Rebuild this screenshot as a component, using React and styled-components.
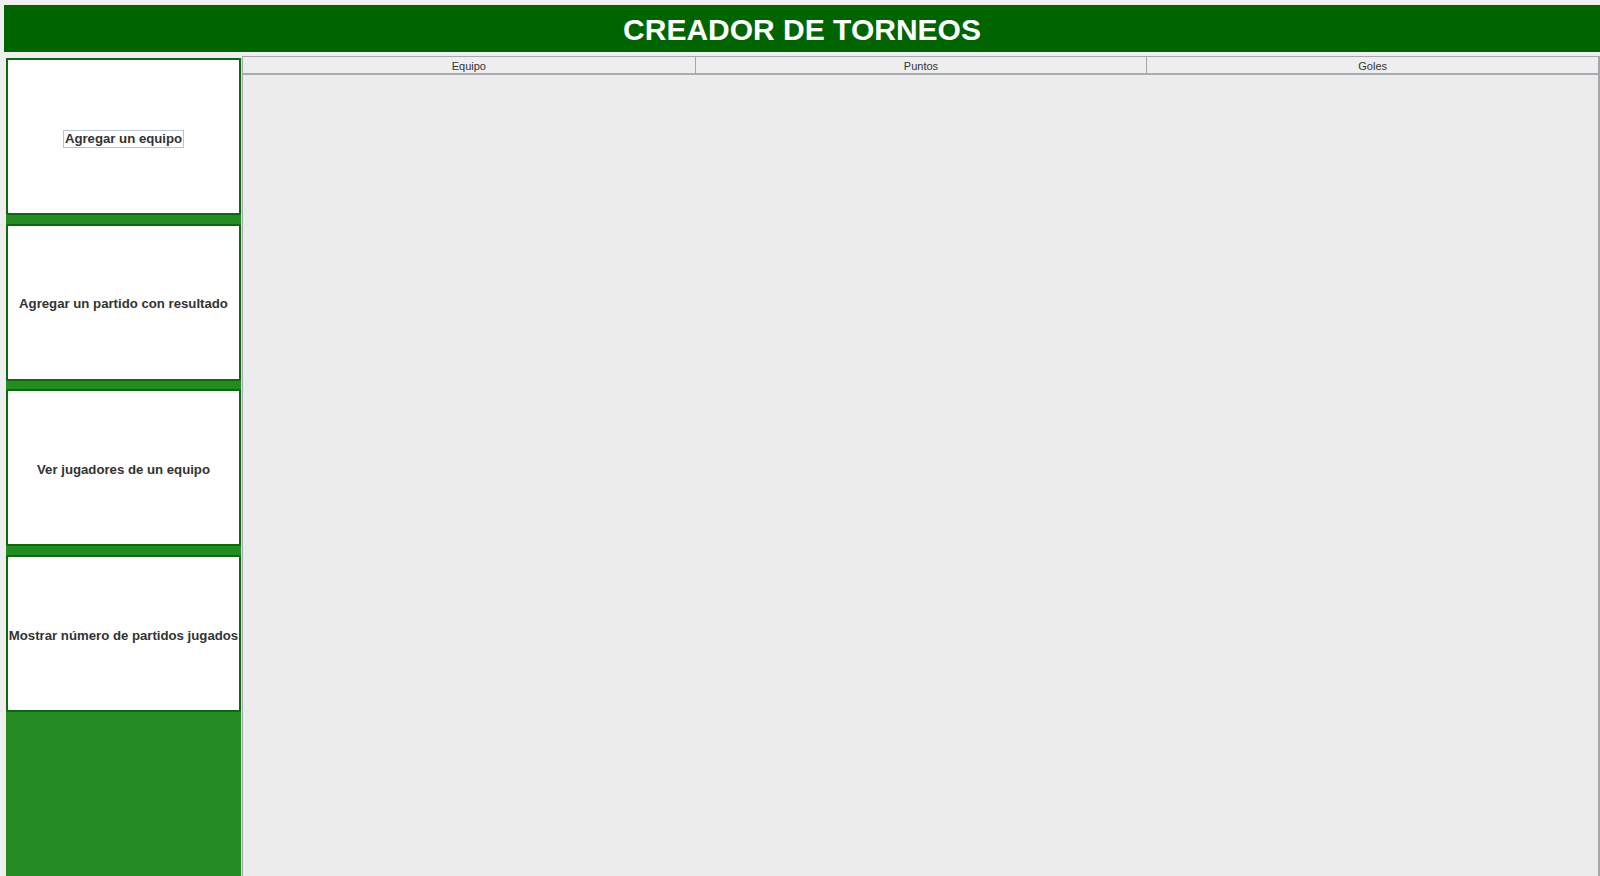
import React from "react";
import styled, { createGlobalStyle } from "styled-components";

const GlobalStyle = createGlobalStyle`
  html, body {
    margin: 0;
    padding: 0;
    background: #eeeeee;
    overflow: hidden;
  }
  body {
    font-family: "Liberation Sans", Arial, sans-serif;
  }
`;

const Frame = styled.div`
  height: 876px;
  padding: 5px 0 0 4px;
  box-sizing: border-box;
  display: flex;
  flex-direction: column;
`;

const TitleBar = styled.header`
  height: 47px;
  background-color: #006400;
  color: #fff;
  display: flex;
  align-items: center;
  justify-content: center;
  padding-top: 2px;
  box-sizing: border-box;
  font-size: 30px;
  font-weight: bold;
`;

const Body = styled.div`
  flex: 1;
  display: flex;
  flex-direction: row;
  margin-top: 4px;
  padding-left: 2px;
  min-height: 0;
`;

const Menu = styled.nav`
  width: 236px;
  flex: 0 0 236px;
  box-sizing: border-box;
  margin-top: 2px;
  background-color: #228b22;
  display: grid;
  grid-template-columns: minmax(0, 1fr);
  grid-auto-rows: 157px;
  row-gap: 8.7px;
  align-content: start;
  border-right: 1px solid #d6dcd6;
`;

const MenuButton = styled.button`
  width: 100%;
  min-width: 0;
  box-sizing: border-box;
  background: #fff;
  border: 2px solid #0c6a0c;
  border-radius: 2px;
  margin: 0;
  padding: 4px 0 0;
  font-family: "Liberation Sans", Arial, sans-serif;
  font-size: 13.2px;
  font-weight: bold;
  color: #333333;
  cursor: pointer;
  display: flex;
  align-items: center;
  justify-content: center;
  white-space: nowrap;
  overflow: hidden;
`;

const Label = styled.span`
  padding: 0 1px;
  line-height: 16px;
  border: 1px solid ${(p) => (p.$focused ? "#b8c4d4" : "transparent")};
`;

const Table = styled.section`
  flex: 1;
  background: #ececec;
  border-left: 1px solid #a4a8ae;
  border-right: 2px solid #a4a8ae;
  display: flex;
  flex-direction: column;
`;

const HeaderRow = styled.div`
  display: grid;
  grid-template-columns: 1fr 1fr 1fr;
  height: 16px;
  border-top: 1px solid #a4a8ae;
  border-bottom: 2px solid #a8abb0;
  background: #eeeeee;
`;

const HeaderCell = styled.div`
  font-family: "Liberation Sans", Arial, sans-serif;
  font-size: 11px;
  color: #333;
  display: flex;
  align-items: center;
  justify-content: center;
  padding-top: 1px;
  border-left: ${(p) => (p.$first ? "none" : "1px solid #a4a8ae")};
`;

const actions = [
  "Agregar un equipo",
  "Agregar un partido con resultado",
  "Ver jugadores de un equipo",
  "Mostrar número de partidos jugados",
];

const columns = ["Equipo", "Puntos", "Goles"];

export default function App() {
  return (
    <>
      <GlobalStyle />
      <Frame>
        <TitleBar>CREADOR DE TORNEOS</TitleBar>
        <Body>
          <Menu>
            {actions.map((a, i) => (
              <MenuButton key={a}>
                <Label $focused={i === 0}>{a}</Label>
              </MenuButton>
            ))}
          </Menu>
          <Table>
            <HeaderRow>
              {columns.map((c, i) => (
                <HeaderCell key={c} $first={i === 0}>
                  {c}
                </HeaderCell>
              ))}
            </HeaderRow>
          </Table>
        </Body>
      </Frame>
    </>
  );
}
